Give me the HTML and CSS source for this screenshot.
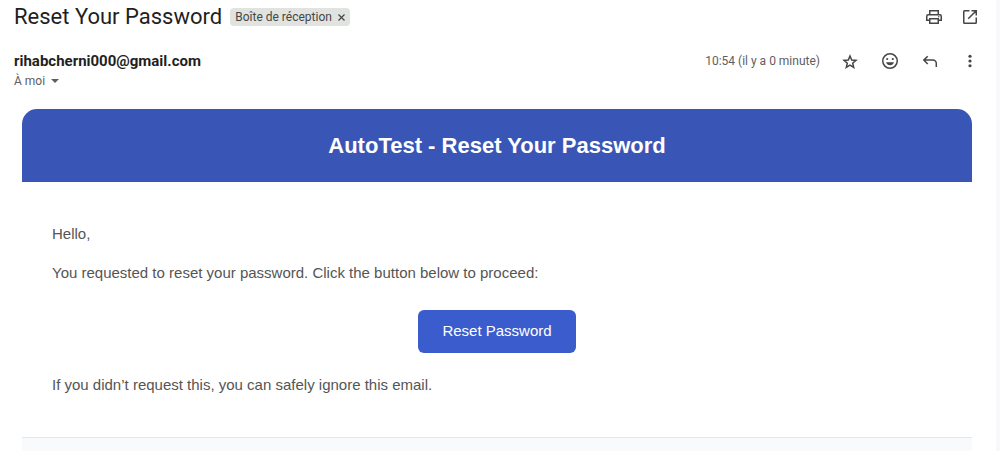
FILE: index.html
```html
<!DOCTYPE html>
<html lang="fr">
<head>
<meta charset="utf-8">
<title>Reset Your Password</title>
<link rel="stylesheet" href="styles.css">
</head>
<body>
<main class="message">
  <header class="subject-bar">
    <h1 class="subject">Reset Your Password</h1>
    <span class="label">Boîte de réception
      <button class="label-remove" type="button" aria-label="Supprimer le libellé">
        <svg width="7" height="7" viewBox="0 0 7 7"><path d="M.5.5l6 6M6.5.5l-6 6" fill="none" stroke="currentColor" stroke-width="1.2"/></svg>
      </button>
    </span>
    <div class="subject-actions">
      <button class="icon-button" type="button" aria-label="Imprimer">
        <svg class="icon" viewBox="0 0 20 20"><path d="M5.750 7V3.750h8.500V7M5.500 13.250H2.750V9.250a1.500 1.500 0 0 1 1.500-1.500h11.500a1.500 1.500 0 0 1 1.500 1.500v4H14.500M5.750 11.750h8.500v4.500h-8.500z"/><circle class="icon-dot" cx="14.750" cy="9.750" r=".75"/></svg>
      </button>
      <button class="icon-button" type="button" aria-label="Ouvrir dans une nouvelle fenêtre">
        <svg class="icon" viewBox="0 0 20 20"><path d="M9.500 3.750h-5a.75.75 0 0 0-.75.75v11c0 .4.35.75.75.75h11a.75.75 0 0 0 .75-.75v-5M11.500 3.750h4.750V8.500M16 4l-7.800 7.800"/></svg>
      </button>
    </div>
  </header>

  <section class="sender-bar">
    <div class="sender">
      <span class="sender-email">rihabcherni000@gmail.com</span>
      <button class="recipient" type="button">À moi
        <svg width="8" height="4" viewBox="0 0 8 4"><path d="M0 0h8L4 4z" fill="currentColor"/></svg>
      </button>
    </div>
    <div class="sender-actions">
      <time class="sent-at">10:54 (il y a 0 minute)</time>
      <button class="icon-button" type="button" aria-label="Suivre">
        <svg class="icon" viewBox="0 0 20 20"><path d="M10 5l1.700 4 4.300.4-3.300 2.800 1 4.200L10 14.200l-3.700 2.200 1-4.200L4 9.400 8.300 9z"/></svg>
      </button>
      <button class="icon-button" type="button" aria-label="Ajouter une réaction">
        <svg class="icon" viewBox="0 0 20 20"><circle cx="10" cy="10" r="7.250"/><g class="icon-dot"><circle cx="7.200" cy="8" r="1.100"/><circle cx="12.800" cy="8" r="1.100"/><path d="M6 11.300h8c-.6 1.900-2.100 3-4 3s-3.400-1.100-4-3z"/></g></svg>
      </button>
      <button class="icon-button" type="button" aria-label="Répondre">
        <svg class="icon" viewBox="0 0 20 20"><path d="M7.700 5.200L3.800 9.100 7.700 13M4 9.100h8.800a3.500 3.500 0 0 1 3.500 3.500V16"/></svg>
      </button>
      <button class="icon-button" type="button" aria-label="Plus">
        <svg class="icon" viewBox="0 0 20 20"><g class="icon-dot"><circle cx="10" cy="5.250" r="1.600"/><circle cx="10" cy="10" r="1.600"/><circle cx="10" cy="14.750" r="1.600"/></g></svg>
      </button>
    </div>
  </section>

  <article class="mail" lang="en">
    <h2 class="mail-title">AutoTest - Reset Your Password</h2>
    <div class="mail-body">
      <p class="mail-text">Hello,</p>
      <p class="mail-text">You requested to reset your password. Click the button below to proceed:</p>
      <a class="mail-button" href="#reset">Reset Password</a>
      <p class="mail-text">If you didn’t request this, you can safely ignore this email.</p>
    </div>
    <div class="mail-footer"></div>
  </article>
</main>
</body>
</html>
```
FILE: styles.css
```css
* {
  box-sizing: border-box;
}

body {
  margin: 0;
  background: #f6f8fc;
  font-family: Roboto, "Liberation Sans", sans-serif;
}

button {
  margin: 0;
  padding: 0;
  border: 0;
  background: none;
  color: inherit;
  font: inherit;
  cursor: pointer;
}

.message {
  min-height: 100vh;
  margin-right: 4px;
  background: #fff;
}

.subject-bar {
  display: flex;
  align-items: center;
  height: 34px;
  padding: 0 16px 0 14px;
}

.subject {
  margin: 0;
  color: #1f1f1f;
  font-size: 22px;
  font-weight: 400;
  line-height: 28px;
}

.label {
  display: flex;
  align-items: center;
  gap: 6px;
  height: 18px;
  margin-left: 8px;
  padding: 0 5px;
  border-radius: 4px;
  background: #e1e3e1;
  color: #444746;
  font-size: 12px;
  line-height: 18px;
}

.label-remove {
  display: flex;
}

.subject-actions,
.sender-actions {
  display: flex;
  align-items: center;
  margin-left: auto;
  color: #444746;
}

.subject-actions {
  gap: 16px;
}

.sender-actions {
  gap: 20px;
}

.icon-button {
  display: flex;
  align-items: center;
  justify-content: center;
  width: 20px;
  height: 20px;
}

.icon {
  width: 20px;
  height: 20px;
  fill: none;
  stroke: currentColor;
  stroke-width: 1.5;
}

.icon-dot {
  fill: currentColor;
  stroke: none;
}

.sender-bar {
  display: flex;
  align-items: flex-start;
  padding: 17px 16px 18px 14px;
}

.sender {
  display: flex;
  flex-direction: column;
  align-items: flex-start;
}

.sender-email {
  color: #1f1f1f;
  font-size: 15px;
  font-weight: 700;
  line-height: 20px;
}

.recipient {
  display: flex;
  align-items: center;
  gap: 6px;
  color: #5e5e5e;
  font-size: 12px;
  line-height: 20px;
}

.sent-at {
  color: #5e5e5e;
  font-size: 12px;
}

.mail {
  margin: 0 24px 0 22px;
  font-family: Arial, "Liberation Sans", sans-serif;
}

.mail-title {
  margin: 0;
  padding: 24px;
  border-radius: 15px 15px 0 0;
  background: #3956b6;
  color: #fff;
  font-size: 22px;
  font-weight: 700;
  line-height: 25px;
  text-align: center;
}

.mail-body {
  display: flex;
  flex-direction: column;
  gap: 15px;
  padding: 40px 30px;
}

.mail-text {
  margin: 0;
  color: #555;
  font-size: 15px;
  line-height: 24px;
}

.mail-button {
  align-self: center;
  margin: 10px 0 5px;
  padding: 9px 24px 10px;
  border-radius: 6px;
  background: #3b5ccc;
  color: #fff;
  font-size: 15px;
  line-height: 24px;
  text-decoration: none;
}

.mail-footer {
  height: 14px;
  border-top: 1px solid #e5e7eb;
  background: #f8fafc;
}
```
